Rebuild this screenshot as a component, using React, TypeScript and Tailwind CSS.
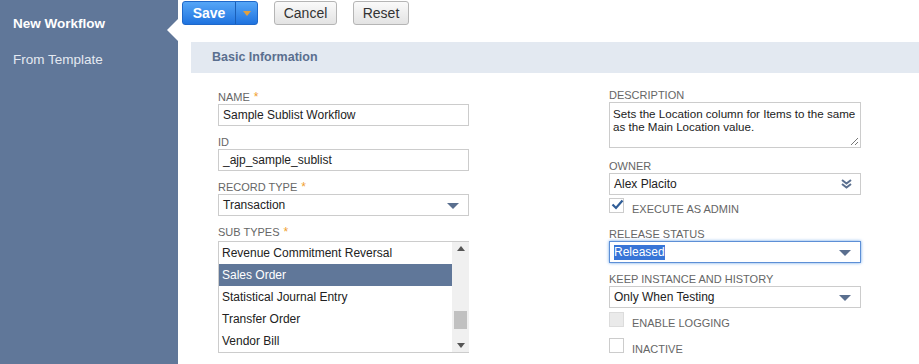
import React from "react";

const font = { fontFamily: '"Liberation Sans", Arial, sans-serif' };

function Label({ text, required }: { text: string; required?: boolean }) {
  return (
    <div className="h-[13px] text-[11px] leading-[13px] text-[#666] uppercase">
      {text}
      {required && <span className="text-[#f0a030] ml-[4px] text-[12px]">*</span>}
    </div>
  );
}

function SelectArrow() {
  return (
    <svg width="12" height="7" viewBox="0 0 12 7" className="absolute right-[9px] top-[8px]">
      <path d="M0 0 L12 0 L6 6 Z" fill="#5a6f8f" />
    </svg>
  );
}

function Select({ value, focused }: { value: string; focused?: boolean }) {
  return (
    <div
      className={
        "relative h-[22px] flex items-center pl-[4px] text-[12px] text-[#222] bg-white border " +
        (focused ? "border-[#5d8fd6] shadow-[0_0_3px_#6aa4e8]" : "border-[#ccc]")
      }
    >
      {focused ? <span className="bg-[#3875d7] text-white leading-[15px]">{value}</span> : value}
      <SelectArrow />
    </div>
  );
}

function Checkbox({ checked, disabled }: { checked?: boolean; disabled?: boolean }) {
  return (
    <div
      className={
        "relative shrink-0 w-[15px] h-[15px] border " +
        (disabled ? "bg-[#eaeaea] border-[#dcdcdc]" : "bg-white border-[#ccc]")
      }
    >
      {checked && (
        <svg width="13" height="11" viewBox="0 0 13 11" className="absolute left-[1px] top-[0px]">
          <path d="M1.5 5.5 L5 9 L11.5 1.5" stroke="#2f5d97" strokeWidth="2.2" fill="none" />
        </svg>
      )}
    </div>
  );
}

const subTypes = [
  "Revenue Commitment Reversal",
  "Sales Order",
  "Statistical Journal Entry",
  "Transfer Order",
  "Vendor Bill",
];

export default function App() {
  return (
    <div className="flex w-[919px] h-[364px] overflow-hidden bg-white" style={font}>
      {/* Sidebar */}
      <div className="relative w-[178px] shrink-0 bg-[#607799] pt-[16px]">
        <div className="pl-[13px] text-[13.5px] font-bold text-white leading-[16px]">New Workflow</div>
        <div className="pl-[13px] mt-[20px] text-[13.5px] text-[#e4e9f1] leading-[16px]">From Template</div>
        <div className="absolute right-0 top-[19px] w-0 h-0 border-y-[11px] border-y-transparent border-r-[11px] border-r-white" />
      </div>

      {/* Main */}
      <div className="flex-1 flex flex-col">
        <div className="shrink-0 flex items-center gap-[16px] pl-[4px] pt-[1px]">
          <div className="flex h-[24px] rounded-[3px] border border-[#1f68c9] bg-gradient-to-b from-[#55a6f7] to-[#1f73df] overflow-hidden">
            <div className="w-[52px] flex items-center justify-center text-[14px] font-bold text-white">Save</div>
            <div className="w-[22px] flex items-center justify-center border-l border-[#1a5fb8]">
              <svg width="8" height="5" viewBox="0 0 8 5">
                <path d="M0 0 L8 0 L4 5 Z" fill="#e0a040" />
              </svg>
            </div>
          </div>
          <div className="h-[24px] w-[63px] flex items-center justify-center rounded-[3px] border border-[#b5b5b5] bg-gradient-to-b from-[#fafafa] to-[#e3e3e3] text-[14px] text-[#333]">
            Cancel
          </div>
          <div className="h-[24px] w-[56px] flex items-center justify-center rounded-[3px] border border-[#b5b5b5] bg-gradient-to-b from-[#fafafa] to-[#e3e3e3] text-[14px] text-[#333]">
            Reset
          </div>
        </div>

        <div className="shrink-0 ml-[13px] mt-[17px] h-[31px] bg-[#e3e9f1] flex items-center pl-[21px]">
          <span className="text-[12.5px] font-bold text-[#5a6f8f]">Basic Information</span>
        </div>

        <div className="shrink-0 flex pl-[40px] pt-[16px] gap-[140px]">
          {/* Left column */}
          <div className="w-[251px] flex flex-col">
            <div className="mt-[2px]">
              <Label text="Name" required />
              <div className="h-[22px] border border-[#ccc] flex items-center pl-[4px] text-[12px] text-[#222]">
                Sample Sublist Workflow
              </div>
            </div>
            <div className="mt-[10px]">
              <Label text="ID" />
              <div className="h-[22px] border border-[#ccc] flex items-center pl-[4px] text-[12px] text-[#222]">
                _ajp_sample_sublist
              </div>
            </div>
            <div className="mt-[10px]">
              <Label text="Record Type" required />
              <Select value="Transaction" />
            </div>
            <div className="mt-[10px]">
              <Label text="Sub Types" required />
              <div className="mt-[2px] h-[112px] flex border border-[#ccc] border-r-0">
                <div className="flex-1 flex flex-col">
                  {subTypes.map((t) => (
                    <div
                      key={t}
                      className={
                        "h-[22px] shrink-0 flex items-center pl-[3px] text-[12px] " +
                        (t === "Sales Order" ? "bg-[#607799] text-white" : "text-[#222]")
                      }
                    >
                      {t}
                    </div>
                  ))}
                </div>
                <div className="w-[17px] bg-[#f0f0f0] flex flex-col items-center justify-between py-[4px]">
                  <svg width="8" height="5" viewBox="0 0 8 5">
                    <path d="M0 5 L8 5 L4 0 Z" fill="#555" />
                  </svg>
                  <div className="flex-1 w-full flex flex-col justify-end pb-[14px]">
                    <div className="mx-[2px] h-[18px] bg-[#c1c1c1]" />
                  </div>
                  <svg width="8" height="5" viewBox="0 0 8 5">
                    <path d="M0 0 L8 0 L4 5 Z" fill="#555" />
                  </svg>
                </div>
              </div>
            </div>
          </div>

          {/* Right column */}
          <div className="w-[252px] flex flex-col">
            <div>
              <Label text="Description" />
              <div className="relative h-[46px] border border-[#ccc] pl-[3px] pr-[1px] pt-[4px] text-[11.6px] leading-[13px] text-[#222]">
                Sets the Location column for Items to the same as the Main Location value.
                <svg width="9" height="9" viewBox="0 0 9 9" className="absolute right-[1px] bottom-[1px]">
                  <path d="M8 1 L1 8 M8 5 L5 8" stroke="#777" strokeWidth="1" />
                </svg>
              </div>
            </div>
            <div className="mt-[12px]">
              <Label text="Owner" />
              <div className="relative h-[22px] border border-[#ccc] flex items-center pl-[4px] text-[12px] text-[#222]">
                Alex Placito
                <svg width="11" height="10" viewBox="0 0 11 10" className="absolute right-[8px] top-[5px]">
                  <path d="M1 1 L5.5 4.5 L10 1 M1 5 L5.5 8.5 L10 5" stroke="#5a6f8f" strokeWidth="2" fill="none" />
                </svg>
              </div>
            </div>
            <div className="mt-[3px] flex items-start">
              <Checkbox checked />
              <span className="ml-[8px] mt-[5px] text-[11px] leading-[13px] text-[#666] uppercase">Execute as Admin</span>
            </div>
            <div className="mt-[12px]">
              <Label text="Release Status" />
              <Select value="Released" focused />
            </div>
            <div className="mt-[10px]">
              <Label text="Keep Instance and History" />
              <Select value="Only When Testing" />
            </div>
            <div className="mt-[4px] flex items-start">
              <Checkbox disabled />
              <span className="ml-[8px] mt-[5px] text-[11px] leading-[13px] text-[#666] uppercase">Enable Logging</span>
            </div>
            <div className="mt-[8px] flex items-start">
              <Checkbox />
              <span className="ml-[8px] mt-[5px] text-[11px] leading-[13px] text-[#666] uppercase">Inactive</span>
            </div>
          </div>
        </div>
      </div>
    </div>
  );
}
